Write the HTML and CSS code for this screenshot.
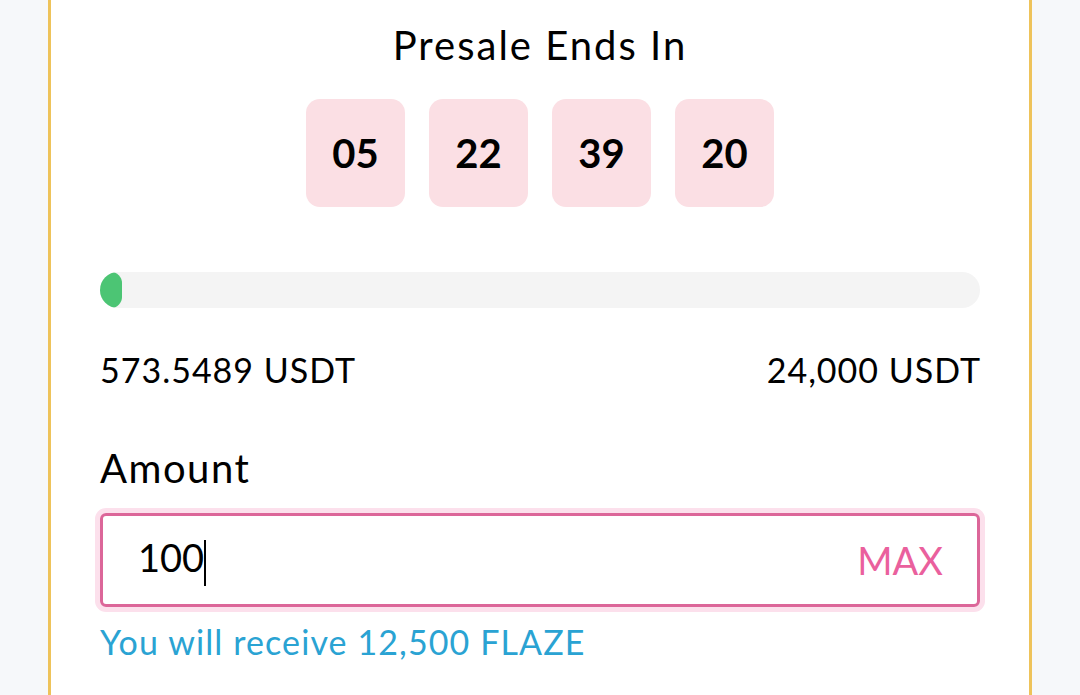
FILE: index.html
```html
<!DOCTYPE html>
<html lang="en">
<head>
    <meta charset="UTF-8">
    <meta name="viewport" content="width=device-width, initial-scale=1.0">
    <title>Presale</title>
    <link rel="stylesheet" href="styles.css">
</head>
<body>
    <div class="painel">
        <h1 class="titulo">Presale Ends In</h1>

        <div class="contagem">
            <div class="bloco">05</div>
            <div class="bloco">22</div>
            <div class="bloco">39</div>
            <div class="bloco">20</div>
        </div>

        <div class="barra">
            <div class="preenchido" style="width: 2.5%"></div>
        </div>

        <div class="totais">
            <span>573.5489 USDT</span>
            <span>24,000 USDT</span>
        </div>

        <label class="rotulo" for="valor">Amount</label>
        <div class="campo">
            <span class="valor" id="valor">100<span class="cursor"></span></span>
            <span class="max">MAX</span>
        </div>
        <div class="recebe">You will receive 12,500 FLAZE</div>
    </div>
</body>
</html>
```

FILE: styles.css
```css
* {
    box-sizing: border-box;
    margin: 0;
    padding: 0;
}

body {
    background-color: #f6f8fa;
    font-family: 'Lato', 'Noto Sans', sans-serif;
    color: #000;
    height: 695px;
    overflow: hidden;
}

.painel {
    background-color: white;
    margin: 0 48px;
    border-left: 3px solid #eec35a;
    border-right: 3px solid #eec35a;
    padding: 20px 49px 60px;
    min-height: 100%;
}

.titulo {
    text-align: center;
    font-size: 40px;
    font-weight: 400;
    line-height: 50px;
    letter-spacing: 2px;
}

.contagem {
    display: flex;
    justify-content: center;
    gap: 24px;
    margin-top: 29px;
}

.bloco {
    width: 99px;
    height: 108px;
    background-color: #fbdfe4;
    border-radius: 14px;
    display: flex;
    justify-content: center;
    align-items: center;
    font-size: 40px;
    font-weight: 700;
}

.barra {
    margin-top: 65px;
    height: 36px;
    background-color: #f4f4f4;
    border-radius: 18px;
    overflow: hidden;
}

.preenchido {
    height: 100%;
    background-color: #4cc574;
    border-radius: 18px;
}

.totais {
    display: flex;
    justify-content: space-between;
    margin-top: 42px;
    font-size: 34px;
    line-height: 40px;
    letter-spacing: 1px;
}

.totais span:last-child {
    margin-right: -1px;
}

.rotulo {
    display: block;
    margin-top: 55px;
    font-size: 40px;
    line-height: 46px;
    letter-spacing: 1.5px;
}

.campo {
    margin-top: 22px;
    height: 94px;
    border: 3px solid #dc6699;
    border-radius: 6px;
    box-shadow: 0 0 0 5px #fce0ec;
    display: flex;
    align-items: center;
    justify-content: space-between;
    padding: 0 34px 0 35px;
    font-size: 38px;
}

.cursor {
    display: inline-block;
    width: 2px;
    height: 46px;
    background-color: #000;
    vertical-align: middle;
}

.max {
    color: #ea609d;
}

.recebe {
    margin-top: 15px;
    color: #2aa3d3;
    font-size: 34px;
    line-height: 40px;
    letter-spacing: 1.1px;
}
```
